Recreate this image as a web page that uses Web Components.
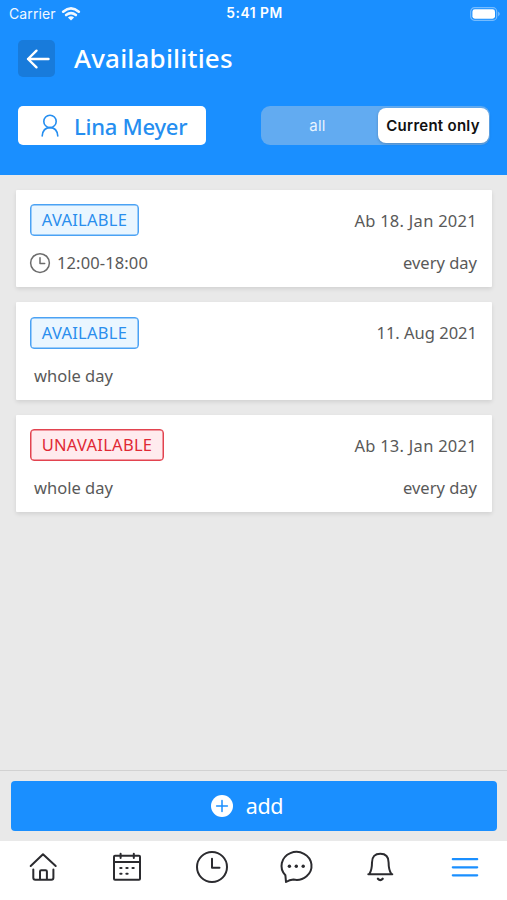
<!DOCTYPE html>
<html lang="en">
<head>
<meta charset="utf-8">
<meta name="viewport" content="width=device-width, initial-scale=1">
<title>Availabilities</title>
<style>
    body{
        margin:0;
        font-family:"Noto Sans", "Open Sans", sans-serif;
        font-size:16.5px;
        color:#595959;
    }
</style>
</head>
<body>
<availability-app></availability-app>

<script>
function shadow(el, html) {
    const template = document.createElement('template');
    template.innerHTML = html;
    el.attachShadow({ mode: 'open' }).appendChild(template.content.cloneNode(true));
}

// all icons are stroked with the current colour
const icons = {
    wifi: ['0 0 18 14', '<g stroke-width="2.6"><path d="M1.2 4.7Q9-1.8 16.8 4.7"/><path d="M4.1 8Q9 4.2 13.9 8"/></g><path d="M9 13.4 5.9 10.5Q9 8.1 12.1 10.5Z" fill="currentColor" stroke="none"/>'],
    battery: ['0 0 30 14', '<rect x=".7" y=".7" width="26" height="12.6" rx="3.8" stroke="rgba(255,255,255,.4)" stroke-width="1.2"/><rect x="2.4" y="2.3" width="22.6" height="9.4" rx="2.4" fill="currentColor" stroke="none"/><path d="M28.3 4.6Q31 7 28.3 9.4Z" fill="currentColor" opacity=".55" stroke="none"/>'],
    back: ['0 0 24 20', '<path d="M22.5 10H2M10.5 1.7 2 10l8.5 8.3" stroke-width="2.4"/>'],
    person: ['0 0 18 23', '<circle cx="9" cy="7.4" r="6.2" stroke-width="1.6"/><path d="M1.2 22C1.6 16.8 4.6 13.6 9 13.6S16.4 16.8 16.8 22" stroke-width="1.6"/>'],
    clock: ['0 0 32 32', '<circle cx="16" cy="16" r="15"/><path d="M16 7.7V16.7H23.5"/>'],
    plus: ['0 0 22 22', '<circle cx="11" cy="11" r="11" fill="currentColor" stroke="none"/><path d="M11 5.6V16.4M5.6 11H16.4" stroke="#1a8fff" stroke-width="1.5"/>'],
    home: ['0 0 32 32', '<path d="M3.7 15 16 3.2 28.7 15M6.3 18.5V26.7Q6.3 28.7 8.3 28.7H24.4Q26.4 28.7 26.4 26.7V18.5M13 28.4V20.5Q13 19.2 14.3 19.2H18.6Q19.9 19.2 19.9 20.5V28.4"/>'],
    calendar: ['0 0 32 32', '<rect x="3" y="4.8" width="26" height="24" rx="1"/><path d="M3 11H29M9.6 2.8V7M22.8 2.8V7"/><path d="M9.3 17H10.5M15.4 17H16.6M21.5 17H22.7M9.3 22.8H10.5M15.4 22.8H16.6" stroke-width="2.1"/>'],
    chat: ['0 0 32 32', '<path d="M5.4 24.3A15 14 0 1 1 13.4 28.6Q9.6 29 6 31Z"/><g fill="currentColor" stroke="none"><circle cx="9.4" cy="15.3" r="1.7"/><circle cx="16.3" cy="15.3" r="1.7"/><circle cx="23.2" cy="15.3" r="1.7"/></g>'],
    bell: ['0 0 32 32', '<path d="M4.3 23.3H28.3M5.5 22.7Q8 18.6 8 11.5C8 5.5 11 2.8 16.3 2.8S24.6 5.5 24.6 11.5Q24.6 18.6 27.2 22.7"/><path d="M13.9 27.8Q16.3 30.5 18.7 27.8" stroke-width="2.3"/>'],
    menu: ['0 0 32 32', '<path d="M3.8 7.2H28.2M3.8 15.3H28.2M3.8 23.3H28.2" stroke-width="2.2"/>']
};

class AppIcon extends HTMLElement {
    connectedCallback() {
        const [box, body] = icons[this.getAttribute('name')];
        shadow(this, `
            <style>
                :host{ display:block; flex:none; width:32px; height:32px; }
                svg{ display:block; width:100%; height:100%; overflow:visible; stroke-width:var(--stroke, 2); }
            </style>
            <svg viewBox="${box}" fill="none" stroke="currentColor" stroke-linecap="round" stroke-linejoin="round">${body}</svg>
        `);
    }
}

class StatusBar extends HTMLElement {
    connectedCallback() {
        shadow(this, `
            <style>
                :host{
                    display:grid;
                    grid-template-columns:1fr auto 1fr;
                    align-items:center;
                    height:27px;
                    padding:0 7px 0 9px;
                    font:14px/27px Inter, sans-serif;
                }
                .carrier{ display:flex; align-items:center; gap:6px; opacity:.94; }
                .carrier span{ letter-spacing:.12px; }
                .time{ font-size:13.8px; font-weight:600; letter-spacing:.5px; }
                .wifi{ width:18px; height:14px; }
                .battery{ width:30px; height:14px; justify-self:end; }
            </style>
            <div class="carrier"><span>Carrier</span><app-icon class="wifi" name="wifi"></app-icon></div>
            <div class="time">5:41 PM</div>
            <app-icon class="battery" name="battery"></app-icon>
        `);
    }
}

class SegmentControl extends HTMLElement {
    connectedCallback() {
        shadow(this, `
            <style>
                :host{
                    display:flex;
                    box-sizing:border-box;
                    width:229px;
                    height:39px;
                    padding:2px 1px 2px 2px;
                    border-radius:9px;
                    background:#62abf1;
                    font:15px/36px Inter, sans-serif;
                    text-align:center;
                }
                .all{ flex:1; padding-right:5px; color:#e8f4ff; letter-spacing:.3px; }
                .current{
                    width:111px;
                    border-radius:8px;
                    background:#fff;
                    color:#111;
                    font-weight:600;
                    letter-spacing:.27px;
                    box-shadow:0 1px 3px rgba(0, 0, 0, 0.2);
                    white-space:nowrap;
                }
            </style>
            <div class="all"><slot name="all"></slot></div>
            <div class="current"><slot name="current"></slot></div>
        `);
    }
}

class PageHeader extends HTMLElement {
    connectedCallback() {
        shadow(this, `
            <style>
                :host{
                    display:block;
                    flex:none;
                    height:175px;
                    background:#1a8fff;
                    color:#fff;
                }
                .title{
                    display:flex;
                    align-items:center;
                    gap:19px;
                    height:37px;
                    padding:13px 18px 0;
                }
                .back{
                    display:grid;
                    place-items:center;
                    width:37px;
                    height:37px;
                    border-radius:5px;
                    background:#187bdb;
                }
                .back app-icon{ width:24px; height:20px; margin-left:2px; }
                h1{
                    margin:0 0 2px;
                    font-size:26px;
                    line-height:36px;
                    font-weight:500;
                    letter-spacing:.18px;
                }
                .filters{
                    display:flex;
                    justify-content:space-between;
                    padding:29px 17.5px 0 18px;
                }
                .user{
                    display:flex;
                    align-items:center;
                    box-sizing:border-box;
                    width:188px;
                    height:39px;
                    padding-left:23px;
                    gap:15px;
                    border-radius:5px;
                    background:#fff;
                    color:#258ef0;
                    font-size:22px;
                    font-weight:500;
                    white-space:nowrap;
                }
                .user app-icon{ width:18px; height:23px; }
            </style>
            <status-bar></status-bar>
            <div class="title">
                <div class="back"><app-icon name="back"></app-icon></div>
                <h1><slot></slot></h1>
            </div>
            <div class="filters">
                <div class="user"><app-icon name="person"></app-icon><slot name="user"></slot></div>
                <segment-control><span slot="all">all</span><span slot="current">Current only</span></segment-control>
            </div>
        `);
    }
}

class AvailabilityCard extends HTMLElement {
    connectedCallback() {
        const free = this.getAttribute('state') !== 'unavailable';
        const timed = this.hasAttribute('timed');
        shadow(this, `
            <style>
                :host{
                    display:block;
                    box-sizing:border-box;
                    height:97.5px;
                    padding:14.5px 15px 0 14.5px;
                    background:#fff;
                    box-shadow:0 2px 4px rgba(0, 0, 0, 0.1);
                    border-radius:1px;
                }
                .row{ display:flex; align-items:center; justify-content:space-between; height:32px; }
                .row + .row{ height:24px; margin-top:15px; }
                .badge{
                    box-sizing:border-box;
                    width:${free ? 109 : 134}px;
                    height:32px;
                    border:1px solid ${free ? '#4ba2f4' : '#e2434f'};
                    box-shadow:inset 0 0 0 .5px ${free ? '#4ba2f4' : '#e2434f'};
                    border-radius:4px;
                    background:${free ? '#eaf6ff' : '#ffebee'};
                    color:${free ? '#2a8eed' : '#df2935'};
                    line-height:30px;
                    text-align:center;
                    letter-spacing:.27px;
                }
                .time{ display:flex; align-items:center; gap:7px; padding-left:${timed ? 0 : 4}px; line-height:24px; }
                .time app-icon{ --stroke:2.4; width:20px; height:20px; color:#6c6c6c; }
                .repeat{ line-height:24px; }
            </style>
            <div class="row">
                <div class="badge">${free ? 'AVAILABLE' : 'UNAVAILABLE'}</div>
                <slot name="date"></slot>
            </div>
            <div class="row">
                <div class="time">${timed ? '<app-icon name="clock"></app-icon>' : ''}<slot name="time"></slot></div>
                <div class="repeat"><slot name="repeat"></slot></div>
            </div>
        `);
    }
}

class AddBar extends HTMLElement {
    connectedCallback() {
        shadow(this, `
            <style>
                :host{
                    display:block;
                    flex:none;
                    box-sizing:border-box;
                    height:71px;
                    padding:10px 10px 0 11px;
                    border-top:1px solid #d2d2d2;
                }
                button{
                    display:flex;
                    align-items:center;
                    justify-content:center;
                    gap:13px;
                    width:100%;
                    height:49.5px;
                    padding:0 14px 0 0;
                    border:0;
                    border-radius:4px;
                    background:#1a8fff;
                    color:#fff;
                    font:21.5px/48px "Noto Sans", sans-serif;
                    letter-spacing:-.4px;
                }
                app-icon{ width:22px; height:22px; }
            </style>
            <button><app-icon name="plus"></app-icon><slot></slot></button>
        `);
    }
}

class TabBar extends HTMLElement {
    connectedCallback() {
        const tabs = ['home', 'calendar', 'clock', 'chat', 'bell', 'menu'];
        shadow(this, `
            <style>
                :host{
                    display:flex;
                    flex:none;
                    height:59px;
                    padding-left:1px;
                    background:#fff;
                    color:#2b2b2f;
                }
                .tab{ flex:1; display:flex; justify-content:center; padding-top:10px; }
                .tab.active{ padding-top:10.5px; color:#1a8fff; }
            </style>
            ${tabs.map(t => `<div class="tab ${t === 'menu' ? 'active' : ''}"><app-icon name="${t}"></app-icon></div>`).join('')}
        `);
    }
}

class AvailabilityApp extends HTMLElement {
    connectedCallback() {
        shadow(this, `
            <style>
                :host{
                    display:flex;
                    flex-direction:column;
                    height:900px;
                    background:#e9e9e9;
                    overflow:hidden;
                }
                .list{
                    flex:1;
                    display:flex;
                    flex-direction:column;
                    gap:15px;
                    padding:14.5px 15px 0 15.5px;
                }
                .name{ letter-spacing:-.25px; }
                .range{ letter-spacing:.12px; }
                .from{ letter-spacing:.27px; }
            </style>
            <page-header>Availabilities<span class="name" slot="user">Lina Meyer</span></page-header>
            <div class="list">
                <availability-card timed>
                    <span class="from" slot="date">Ab 18. Jan 2021</span>
                    <span class="range" slot="time">12:00-18:00</span>
                    <span slot="repeat">every day</span>
                </availability-card>
                <availability-card>
                    <span slot="date">11. Aug 2021</span>
                    <span slot="time">whole day</span>
                </availability-card>
                <availability-card state="unavailable">
                    <span class="from" slot="date">Ab 13. Jan 2021</span>
                    <span slot="time">whole day</span>
                    <span slot="repeat">every day</span>
                </availability-card>
            </div>
            <add-bar>add</add-bar>
            <tab-bar></tab-bar>
        `);
    }
}

customElements.define('app-icon', AppIcon);
customElements.define('status-bar', StatusBar);
customElements.define('segment-control', SegmentControl);
customElements.define('page-header', PageHeader);
customElements.define('availability-card', AvailabilityCard);
customElements.define('add-bar', AddBar);
customElements.define('tab-bar', TabBar);
customElements.define('availability-app', AvailabilityApp);
</script>
</body>
</html>
